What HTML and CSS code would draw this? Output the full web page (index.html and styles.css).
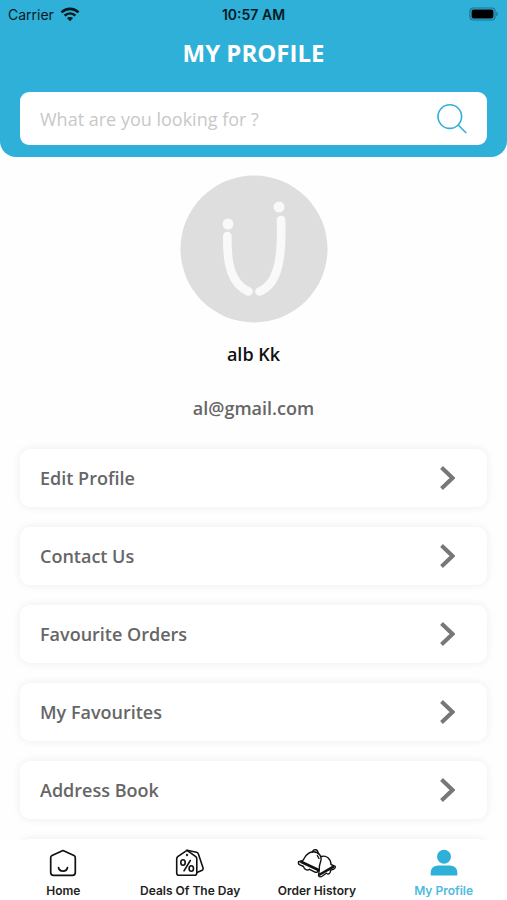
FILE: index.html
```html
<!DOCTYPE html>
<html lang="en">
<head>
    <meta charset="UTF-8">
    <meta name="viewport" content="width=device-width, initial-scale=1.0">
    <title>My Profile</title>
    <link rel="stylesheet" href="styles.css">
</head>
<body>
    <header class="header">
        <div class="status-bar">
            <div class="carrier">
                <span>Carrier</span>
                <svg width="20" height="15" viewBox="0 0 20 15" fill="none" stroke="#06191f" stroke-width="2.6">
                    <path d="M1.5 5.4C6.3.7 13.7.7 18.5 5.4"/>
                    <path d="M4.6 8.6C7.8 5.7 12.2 5.7 15.4 8.6"/>
                    <path d="M10 14.2L6.9 11.1C8.7 9.6 11.3 9.6 13.1 11.1Z" fill="#06191f" stroke="none"/>
                </svg>
            </div>
            <span class="clock">10:57 AM</span>
            <div class="battery">
                <svg width="30" height="14" viewBox="0 0 30 14">
                    <rect x="1" y="1" width="25" height="12" rx="3.5" fill="none" stroke="#1d7590" stroke-width="1.2"/>
                    <rect x="2.6" y="2.6" width="21.8" height="8.8" rx="2" fill="#000"/>
                    <path d="M27.3 4.6c2 .7 2 4.1 0 4.8z" fill="#1d7590"/>
                </svg>
            </div>
        </div>
        <h1>MY PROFILE</h1>
        <form class="search">
            <input type="text" name="search" aria-label="Search" placeholder="What are you looking for ?">
            <button type="submit" aria-label="Search">
                <svg width="30" height="30" viewBox="0 0 30 30" fill="none" stroke="#2fb0d8" stroke-width="1.6">
                    <circle cx="12.8" cy="12.6" r="11.8"/>
                    <path d="M21.2 21L29.2 29"/>
                </svg>
            </button>
        </form>
    </header>

    <main class="content">
        <svg class="avatar" width="148" height="148" viewBox="0 0 148 148">
            <circle cx="74" cy="74" r="73.5" fill="#dedede"/>
            <g fill="#f9f9f9">
                <circle cx="48" cy="49" r="5.5"/>
                <circle cx="99" cy="32" r="5.5"/>
            </g>
            <g fill="none" stroke="#f9f9f9" stroke-width="8.6" stroke-linecap="round">
                <path d="M47.3 61C46.8 91 52 109 68.5 116.5"/>
                <path d="M101 45C102.500 86 97 110 79.500 116.500"/>
            </g>
        </svg>
        <h2 class="name">alb Kk</h2>
        <p class="email">al@gmail.com</p>

        <ul class="menu">
            <li><a href="#edit">Edit Profile
                <svg width="16" height="26" viewBox="0 0 16 26"><path d="M2.500 2.500L13.500 13L2.500 23.500"/></svg></a></li>
            <li><a href="#contact">Contact Us
                <svg width="16" height="26" viewBox="0 0 16 26"><path d="M2.500 2.500L13.500 13L2.500 23.500"/></svg></a></li>
            <li><a href="#orders">Favourite Orders
                <svg width="16" height="26" viewBox="0 0 16 26"><path d="M2.500 2.500L13.500 13L2.500 23.500"/></svg></a></li>
            <li><a href="#favourites">My Favourites
                <svg width="16" height="26" viewBox="0 0 16 26"><path d="M2.500 2.500L13.500 13L2.500 23.500"/></svg></a></li>
            <li><a href="#address">Address Book
                <svg width="16" height="26" viewBox="0 0 16 26"><path d="M2.500 2.500L13.500 13L2.500 23.500"/></svg></a></li>
            <li class="empty"></li>
        </ul>
    </main>

    <nav class="tabs">
        <a href="#home">
            <svg width="40" height="30" viewBox="0 0 40 30" fill="none" stroke="#111" stroke-width="1.7" stroke-linejoin="round" stroke-linecap="round">
                <path d="M20 1.500L31 6.500Q32.300 7.200 32.300 8.700V23.500Q32.300 26.300 29.500 26.300H10.500Q7.700 26.300 7.700 23.500V8.700Q7.700 7.200 9 6.500Z"/>
                <path d="M15.500 18.500C16.300 23.200 23.700 23.200 24.500 18.500"/>
            </svg>
            Home
        </a>
        <a href="#deals">
            <svg width="40" height="30" viewBox="0 0 40 30" fill="none" stroke="#111" stroke-width="1.600" stroke-linejoin="round" stroke-linecap="round">
                <path d="M17 1.300L25.800 7.700Q26.800 8.500 26.800 10V24Q26.800 26.300 24.500 26.300H9Q6.700 26.300 6.700 24V10Q6.700 8.500 7.700 7.700Z"/>
                <path d="M17 1.300L26.500 3.300Q28 3.600 28.400 5L33 18.800Q33.500 20.500 32.200 21.300L27.500 23.300"/>
                <circle cx="17" cy="6" r=".4"/>
                <ellipse cx="13" cy="13.500" rx="2.200" ry="2.700"/>
                <ellipse cx="21.300" cy="19.500" rx="2.200" ry="2.700"/>
                <path d="M20.300 11.500L14 21.800"/>
            </svg>
            Deals Of The Day
        </a>
        <a href="#history">
            <svg width="40" height="30" viewBox="0 0 40 30" fill="none" stroke="#111" stroke-width="1.400" stroke-linejoin="round" stroke-linecap="round">
                <path d="M15.500 3.300C15.500-.3 21.500-.3 21 4.300"/>
                <path d="M5.500 11.800C8.500 8.500 8 4.300 15.500 2.800C22 2.500 25.500 7.500 23.500 13C22.500 16 22 17 22.300 20"/>
                <path d="M5.500 11.800L1.500 12.800Q1 15.500 3.500 16.200L6.500 17.500C7 20.500 10.500 22 12.500 20.300L18.500 23.300Q20.500 23.800 21 21.500"/>
                <path d="M4.500 13L21.500 21" stroke-width="2.800"/>
                <path d="M24.500 7.500C29 6 34 9.500 34 15.500L38.300 17.300Q38.800 19 36.800 20L33.500 21.300C34 24 31.500 26 29.300 24.300L25.500 27Q22.500 29 21.500 26.500L22.300 21"/>
                <path d="M36 17.800L22.800 25.500" stroke-width="2.600"/>
                <path d="M20.300 6.500L22 9.500"/>
            </svg>
            Order History
        </a>
        <a href="#profile" class="active">
            <svg width="40" height="30" viewBox="0 0 40 30" fill="#2fb0d8">
                <circle cx="20" cy="7.700" r="7"/>
                <path d="M6.700 26.500V24Q6.700 16.500 14.500 16.500H25.500Q33.300 16.500 33.300 24V26.500Z"/>
            </svg>
            My Profile
        </a>
    </nav>
</body>
</html>
```

FILE: styles.css
```css
* {
    box-sizing: border-box;
}

body {
    margin: 0;
    height: 100vh;
    display: flex;
    flex-direction: column;
    font-family: "Open Sans", sans-serif;
    background: #fefefe;
}

.header {
    background: #2fb0d8;
    border-radius: 0 0 16px 16px;
    padding: 0 20px 12px;
}

.status-bar {
    display: grid;
    grid-template-columns: 1fr auto 1fr;
    align-items: center;
    height: 28px;
    margin: 0 -12px;
    font-family: Inter, sans-serif;
    font-size: 14px;
    color: #06191f;
}

.carrier {
    display: flex;
    align-items: center;
    gap: 6px;
}

.clock {
    font-weight: 600;
}

.battery {
    display: flex;
    justify-content: flex-end;
}

h1 {
    margin: 8px 0 22px;
    font-size: 24px;
    line-height: 34px;
    font-weight: 700;
    text-align: center;
    color: #fff;
}

.search {
    display: flex;
    align-items: center;
    height: 53px;
    padding: 0 20px;
    background: #fff;
    border-radius: 9px;
}

.search input {
    flex: 1;
    min-width: 0;
    padding: 0;
    border: none;
    outline: none;
    background: none;
    font-family: inherit;
    font-size: 18px;
}

.search input::placeholder {
    color: #c8c8c8;
}

.search button {
    display: flex;
    padding: 0;
    border: none;
    background: none;
    cursor: pointer;
}

.content {
    flex: 1;
    min-height: 0;
    overflow-y: auto;
    scrollbar-width: none;
    padding: 18px 20px 0;
    text-align: center;
}

.avatar {
    display: block;
    margin: 0 auto;
}

.name {
    margin: 18px 0 0;
    font-size: 18px;
    line-height: 26px;
    font-weight: 600;
    color: #111;
}

.email {
    margin: 28px 0;
    font-size: 18px;
    line-height: 26px;
    font-weight: 600;
    color: #666;
}

.menu {
    display: flex;
    flex-direction: column;
    gap: 20px;
    margin: 0;
    padding: 0;
    list-style: none;
}

.menu li {
    border-radius: 10px;
    background: #fff;
    box-shadow: 0 0 10px rgba(0, 0, 0, 0.07);
}

.menu a {
    display: flex;
    align-items: center;
    justify-content: space-between;
    height: 58px;
    padding: 0 32px 0 20px;
    font-size: 18px;
    font-weight: 600;
    color: #666;
    text-decoration: none;
}

.menu svg {
    fill: none;
    stroke: #777;
    stroke-width: 4;
}

.menu .empty {
    height: 58px;
}

.tabs {
    display: grid;
    grid-template-columns: repeat(4, 1fr);
    height: 60px;
    padding-top: 9px;
    background: #fff;
}

.tabs a {
    display: flex;
    flex-direction: column;
    align-items: center;
    gap: 4px;
    font-family: Inter, sans-serif;
    font-size: 12px;
    line-height: 16px;
    font-weight: 600;
    white-space: nowrap;
    color: #222;
    text-decoration: none;
}

.tabs .active {
    color: #4dbbe0;
}
```
